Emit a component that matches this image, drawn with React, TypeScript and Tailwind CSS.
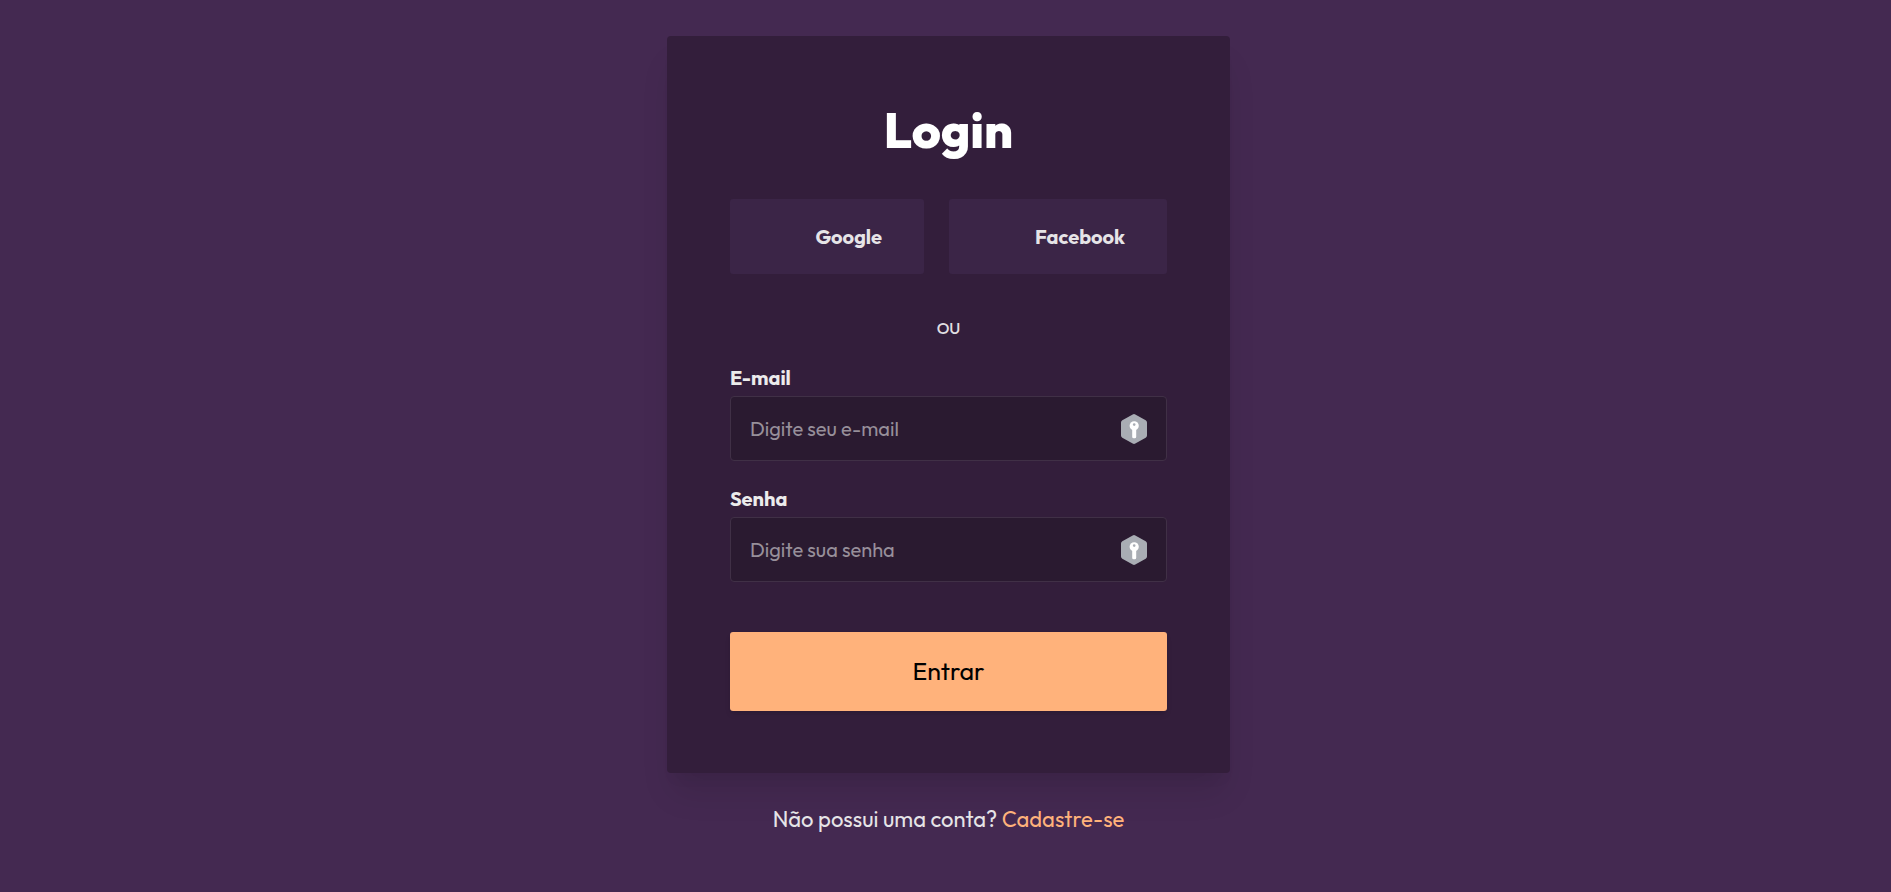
import type { ReactNode } from "react";

function KeyBadge() {
  return (
    <svg width="28" height="30" viewBox="0 0 28 30" aria-hidden="true">
      <path
        d="M12.7.4a2.6 2.6 0 0 1 2.600 0l10.400 5.900a2.600 2.600 0 0 1 1.300 2.200v13a2.600 2.600 0 0 1-1.300 2.200l-10.400 5.900a2.600 2.600 0 0 1-2.600 0L2.300 23.700A2.600 2.600 0 0 1 1 21.500v-13a2.600 2.600 0 0 1 1.300-2.200z"
        fill="#a9adb4"
      />
      <circle cx="14.200" cy="11.800" r="4.600" fill="#fff" />
      <rect x="12.200" y="13" width="4" height="11.300" rx="1.600" fill="#fff" />
      <circle cx="14.200" cy="10.600" r="1.300" fill="#a9adb4" />
    </svg>
  );
}

function SocialButton({ children }: { children: ReactNode }) {
  return (
    <button
      type="button"
      className="flex h-[75px] items-center justify-end rounded-[3px] bg-[#3b2547] pr-[42px] text-xl font-bold text-[#e6e4e7]"
    >
      {children}
    </button>
  );
}

type FieldProps = { id: string; label: string; type: string; placeholder: string };

function Field({ id, label, type, placeholder }: FieldProps) {
  return (
    <div>
      <label htmlFor={id} className="block py-[2px] text-xl leading-8 font-bold text-[#ecebec]">
        {label}
      </label>
      <div className="flex h-[65px] items-center rounded-[4px] border border-[#403046] bg-[#2a1a30] pr-[18px] pl-[19px]">
        <input
          id={id}
          type={type}
          placeholder={placeholder}
          className="h-full min-w-0 flex-1 bg-transparent text-xl text-[#ecebec] outline-none placeholder:text-[#978f9a]"
        />
        <KeyBadge />
      </div>
    </div>
  );
}

export default function App() {
  return (
    <div className="flex min-h-screen flex-col items-center bg-[#442951] pt-9 pr-4 pl-[22px] font-['Outfit',sans-serif]">
      <main className="w-full max-w-[563px] rounded-[4px] bg-[#331e3b] px-[63px] pt-[62px] pb-[62px] shadow-[0_25px_31px_-6px_rgba(0,0,0,0.1),0_12px_12px_-6px_rgba(0,0,0,0.04)]">
        <h1 className="text-center text-[50px] leading-[64px] font-extrabold text-white">Login</h1>
        <div className="mt-[37px] grid grid-cols-[194fr_218fr] gap-[25px]">
          <SocialButton>Google</SocialButton>
          <SocialButton>Facebook</SocialButton>
        </div>
        <p className="mt-[38px] text-center text-base leading-8 font-medium text-[#e0dee1]">OU</p>
        <form className="mt-4" onSubmit={(event) => event.preventDefault()}>
          <div className="flex flex-col gap-5">
            <Field id="email" label="E-mail" type="email" placeholder="Digite seu e-mail" />
            <Field id="senha" label="Senha" type="password" placeholder="Digite sua senha" />
          </div>
          <button
            type="submit"
            className="mt-[50px] h-[79px] w-full rounded-[3px] bg-[#ffb27b] text-[25px] text-black shadow-md"
          >
            Entrar
          </button>
        </form>
      </main>
      <p className="mt-[30px] text-center text-[22px] leading-8 text-[#e6e4e7]">
        Não possui uma conta?{" "}
        <a href="#cadastro" className="text-[#ffb27b]">
          Cadastre-se
        </a>
      </p>
    </div>
  );
}
